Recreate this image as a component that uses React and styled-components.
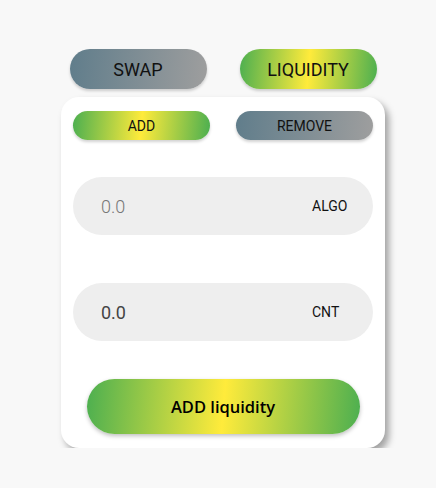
import styled, { createGlobalStyle } from "styled-components";

const GlobalStyle = createGlobalStyle`
    body {
        margin: 0;
        background: #f8f8f8;
        font-family: Roboto, "Liberation Sans", sans-serif;
    }
`

const green = "linear-gradient(95deg, #4caf50 0%, #ffeb3b 50%, #4caf50 100%)";
const grey = "linear-gradient(95deg, #607d8b 0%, #9e9e9e 100%)";

const Page = styled.div`
    width: 324px;
    margin-left: 61px;
    padding-top: 49px;
`
const TabRow = styled.div`
    display: flex;
    justify-content: center;
    gap: 33px;
`
const Pill = styled.button`
    border: none;
    border-radius: 999px;
    background: ${(p) => (p.$active ? green : grey)};
    color: #111;
    font-family: Roboto, sans-serif;
    font-weight: 400;
    cursor: pointer;
    padding: 0;
    box-shadow: 0 2px 3px rgba(0, 0, 0, 0.18);
`
const Tab = styled(Pill)`
    width: 137px;
    height: 40px;
    font-size: 18px;
`
const Card = styled.div`
    margin-top: 8px;
    background: #fff;
    border-radius: 18px;
    padding: 14px 12px 14px;
    display: flex;
    flex-direction: column;
    box-shadow: 4px 5px 7px rgba(0, 0, 0, 0.35);
`
const ModeRow = styled.div`
    display: flex;
    justify-content: space-between;
`
const Mode = styled(Pill)`
    width: 137px;
    height: 29px;
    font-size: 14px;
`
const Field = styled.div`
    margin-top: ${(p) => p.$top}px;
    height: 58px;
    background: #eeeeee;
    border-radius: 29px;
    display: flex;
    align-items: center;
    padding: 0 20px 0 28px;
`
const Amount = styled.span`
    flex: 1;
    font-size: 18px;
    font-weight: ${(p) => (p.$placeholder ? 300 : 400)};
    color: ${(p) => (p.$placeholder ? "#777" : "#444")};
`
const Unit = styled.span`
    width: 41px;
    font-size: 14px;
    color: #111;
`
const Submit = styled(Pill)`
    align-self: center;
    margin-top: 38px;
    width: 273px;
    height: 55px;
    font-family: "Open Sans", sans-serif;
    font-size: 16.5px;
    font-weight: 600;
    color: #000;
    box-shadow: 0 2px 4px rgba(0, 0, 0, 0.25);
`

export default function App() {
    return (
        <>
            <GlobalStyle />
            <Page>
                <TabRow>
                    <Tab>SWAP</Tab>
                    <Tab $active>LIQUIDITY</Tab>
                </TabRow>
                <Card>
                    <ModeRow>
                        <Mode $active>ADD</Mode>
                        <Mode>REMOVE</Mode>
                    </ModeRow>
                    <Field $top={37}>
                        <Amount $placeholder>0.0</Amount>
                        <Unit>ALGO</Unit>
                    </Field>
                    <Field $top={48}>
                        <Amount>0.0</Amount>
                        <Unit>CNT</Unit>
                    </Field>
                    <Submit $active>ADD liquidity</Submit>
                </Card>
            </Page>
        </>
    );
}
